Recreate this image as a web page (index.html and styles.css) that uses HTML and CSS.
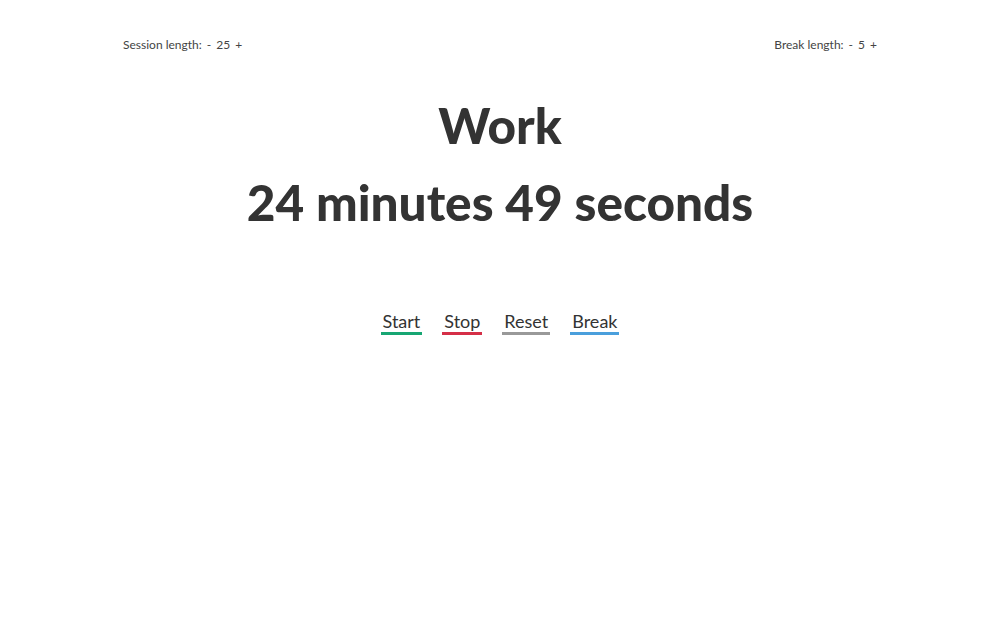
FILE: index.html
```html
<!DOCTYPE html>
<html>
<head>
<meta charset="utf-8">
<link rel="stylesheet" href="styles.css">
</head>
<body>
<div class="page">
  <div class="settings">
    <div class="setting">
      <span class="label">Session length:</span>
      <span class="ctrl">-</span>
      <span class="val">25</span>
      <span class="ctrl">+</span>
    </div>
    <div class="setting">
      <span class="label">Break length:</span>
      <span class="ctrl">-</span>
      <span class="val">5</span>
      <span class="ctrl">+</span>
    </div>
  </div>
  <h1 class="mode">Work</h1>
  <h2 class="time">24 minutes 49 seconds</h2>
  <div class="buttons">
    <span class="btn start">Start</span>
    <span class="btn stop">Stop</span>
    <span class="btn reset">Reset</span>
    <span class="btn brk">Break</span>
  </div>
</div>
</body>
</html>
```
FILE: styles.css
```css
html, body { margin: 0; padding: 0; background: #fff; }
body { font-family: Lato, "Liberation Sans", sans-serif; color: #333; }
.page { width: 754px; margin: 0 auto; padding-top: 37px; }
.settings { display: flex; justify-content: space-between; font-size: 12px; color: #444; line-height: 16px; }
.setting { display: flex; gap: 5px; }
.mode, .time { margin: 0; text-align: center; font-weight: 900; color: #333; }
.mode { font-size: 49.5px; line-height: 60px; margin-top: 42px; }
.time { font-size: 49.5px; line-height: 60px; margin-top: 17px; }
.buttons { display: flex; justify-content: center; gap: 20px; margin-top: 78px; font-size: 18px; }
.btn { padding: 0 2px; border-bottom: 3px solid; line-height: 22px; color: #333; }
.start { border-color: #17a673; }
.stop { border-color: #d52f47; }
.reset { border-color: #999; }
.brk { border-color: #4a9fdc; }
```
